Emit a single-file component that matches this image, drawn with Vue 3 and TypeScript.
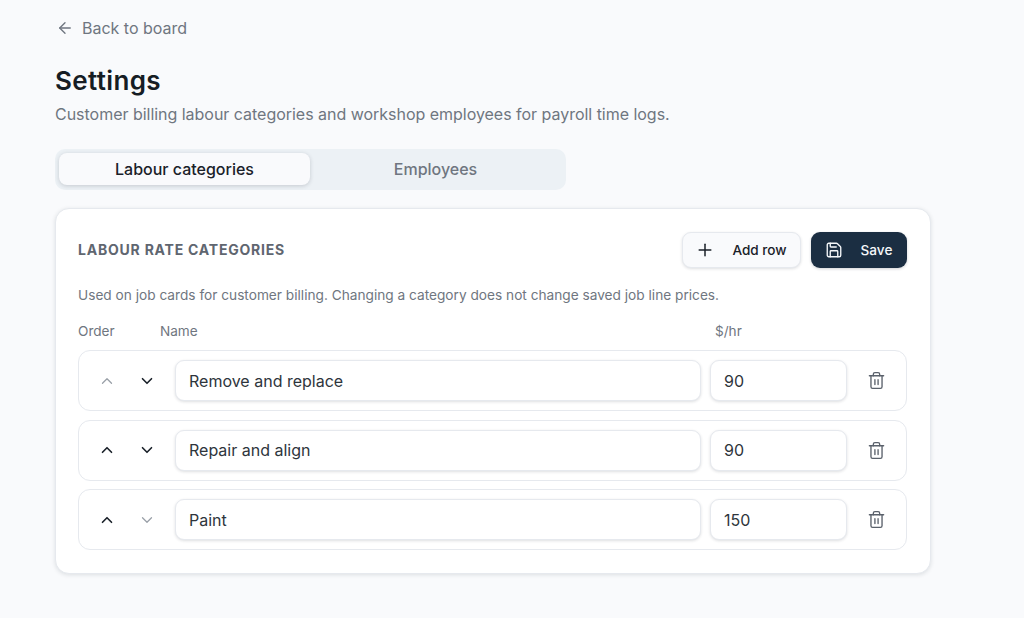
<script setup lang="ts">
interface Row { name: string; rate: string; upOff: boolean; downOff: boolean }
const rows: Row[] = [
  { name: 'Remove and replace', rate: '90', upOff: true, downOff: false },
  { name: 'Repair and align', rate: '90', upOff: false, downOff: false },
  { name: 'Paint', rate: '150', upOff: false, downOff: true },
]
</script>

<template>
  <div class="page">
    <a class="back">
      <svg width="18" height="18" viewBox="0 0 24 24" fill="none" stroke="currentColor" stroke-width="1.8" stroke-linecap="round" stroke-linejoin="round"><path d="M19 12H5" /><path d="m12 19-7-7 7-7" /></svg>
      <span>Back to board</span>
    </a>
    <h1>Settings</h1>
    <p class="sub">Customer billing labour categories and workshop employees for payroll time logs.</p>
    <div class="tabs">
      <div class="tab active">Labour categories</div>
      <div class="tab">Employees</div>
    </div>
    <section class="card">
      <header class="head">
        <h2>LABOUR RATE CATEGORIES</h2>
        <div class="actions">
          <button class="btn light">
            <svg width="20" height="20" viewBox="0 0 24 24" fill="none" stroke="currentColor" stroke-width="1.8" stroke-linecap="round"><path d="M5 12h14" /><path d="M12 5v14" /></svg>
            <span>Add row</span>
          </button>
          <button class="btn dark">
            <svg width="18" height="18" viewBox="0 0 24 24" fill="none" stroke="currentColor" stroke-width="1.8" stroke-linecap="round" stroke-linejoin="round"><path d="M15.2 3a2 2 0 0 1 1.4.6l3.8 3.8a2 2 0 0 1 .6 1.4V19a2 2 0 0 1-2 2H5a2 2 0 0 1-2-2V5a2 2 0 0 1 2-2z" /><path d="M17 21v-7a1 1 0 0 0-1-1H8a1 1 0 0 0-1 1v7" /><path d="M7 3v4a1 1 0 0 0 1 1h7" /></svg>
            <span>Save</span>
          </button>
        </div>
      </header>
      <p class="note">Used on job cards for customer billing. Changing a category does not change saved job line prices.</p>
      <div class="cols">
        <span class="c-order">Order</span>
        <span class="c-name">Name</span>
        <span>$/hr</span>
      </div>
      <div class="list">
        <div v-for="r in rows" :key="r.name" class="row">
          <button class="arrow" :class="{ off: r.upOff }">
            <svg width="18" height="18" viewBox="0 0 24 24" fill="none" stroke="currentColor" stroke-width="2.2" stroke-linecap="round" stroke-linejoin="round"><path d="m18 15-6-6-6 6" /></svg>
          </button>
          <button class="arrow" :class="{ off: r.downOff }">
            <svg width="18" height="18" viewBox="0 0 24 24" fill="none" stroke="currentColor" stroke-width="2.2" stroke-linecap="round" stroke-linejoin="round"><path d="m6 9 6 6 6-6" /></svg>
          </button>
          <div class="field name">{{ r.name }}</div>
          <div class="field rate">{{ r.rate }}</div>
          <button class="trash">
            <svg width="19" height="19" viewBox="0 0 24 24" fill="none" stroke="currentColor" stroke-width="1.7" stroke-linecap="round" stroke-linejoin="round"><path d="M3 6h18" /><path d="M19 6v14a2 2 0 0 1-2 2H7a2 2 0 0 1-2-2V6" /><path d="M8 6V4a2 2 0 0 1 2-2h4a2 2 0 0 1 2 2v2" /><path d="M10 11v6" /><path d="M14 11v6" /></svg>
          </button>
        </div>
      </div>
    </section>
  </div>
</template>

<style>
html, body { margin: 0; background: #f9fafc; }
</style>

<style scoped>
.page {
  box-sizing: border-box;
  width: 1024px;
  height: 618px;
  overflow: hidden;
  padding: 16px 94px 0 55px;
  font-family: Inter, "Liberation Sans", sans-serif;
  color: #1a2129;
  background: #f9fafc;
}
.back {
  display: flex;
  align-items: center;
  gap: 8px;
  height: 24px;
  font-size: 16px;
  letter-spacing: -0.01px;
  color: #6f7680;
}
.back svg { margin-left: 1px; }
h1 {
  margin: 25px 0 0;
  font-size: 26px;
  line-height: 32px;
  font-weight: 600;
  letter-spacing: 0.35px;
  color: #161d24;
}
.sub {
  margin: 5px 0 0;
  font-size: 16px;
  line-height: 24px;
  letter-spacing: -0.025px;
  color: #6f7680;
}
.tabs {
  display: grid;
  grid-template-columns: 1fr 1fr;
  box-sizing: border-box;
  width: 511px;
  height: 41px;
  margin-top: 23px;
  padding: 4px 5px 5px 4px;
  border-radius: 10px;
  background: #ecf1f5;
}
.tab {
  display: flex;
  align-items: center;
  justify-content: center;
  border-radius: 8px;
  font-size: 16px;
  font-weight: 500;
  color: #6f7680;
}
.tab.active {
  background: #f9fafc;
  color: #1a2129;
  box-shadow: 0 1px 4px rgba(20, 30, 45, 0.18);
}
.card {
  box-sizing: border-box;
  width: 876px;
  height: 366px;
  margin-top: 18px;
  padding: 23px 23px 23px 22px;
  background: #fff;
  border: 1px solid #e6e9ee;
  border-radius: 14px;
  box-shadow: 0 1px 4px rgba(20, 30, 45, 0.12);
}
.head {
  display: flex;
  align-items: center;
  justify-content: space-between;
}
h2 {
  position: relative;
  top: -1px;
  margin: 0;
  font-size: 14px;
  font-weight: 700;
  letter-spacing: 0.78px;
  color: #5f6670;
}
.actions { display: flex; gap: 10px; }
.btn {
  display: flex;
  align-items: center;
  justify-content: center;
  box-sizing: border-box;
  height: 36px;
  padding: 0 1px 0 0;
  border-radius: 9px;
  font-family: inherit;
  font-size: 13.6px;
  font-weight: 500;
}
.btn.light {
  gap: 17px;
  width: 119px;
  background: #f9fafc;
  color: #1a2129;
  border: 1px solid #e6e9ee;
  box-shadow: 0 1px 3px rgba(20, 30, 45, 0.14);
}
.btn.dark {
  gap: 18px;
  width: 96px;
  background: #1b2e42;
  color: #f5f7fa;
  border: 0;
  box-shadow: 0 1px 3px rgba(20, 30, 45, 0.2);
}
.note {
  margin: 17px 0 0;
  font-size: 13.68px;
  line-height: 20px;
  color: #6f7680;
}
.cols {
  display: flex;
  margin-top: 16px;
  font-size: 13.6px;
  line-height: 20px;
  color: #6f7680;
}
.c-order { width: 82px; }
.c-name { width: 555px; }
.list {
  display: flex;
  flex-direction: column;
  gap: 8.6px;
  margin-top: 9px;
}
.row {
  display: flex;
  align-items: center;
  box-sizing: border-box;
  height: 61px;
  padding: 0 9px 0 8px;
  border: 1px solid #e6e9ee;
  border-radius: 12px;
}
.arrow {
  display: flex;
  align-items: center;
  justify-content: center;
  width: 40px;
  height: 40px;
  padding: 0;
  background: none;
  border: 0;
  color: #1a2129;
}
.arrow.off { color: #9aa0a8; }
.arrow.off svg { stroke-width: 1.7; }
.field {
  display: flex;
  align-items: center;
  box-sizing: border-box;
  height: 41px;
  padding: 0 13px;
  background: #fff;
  border: 1px solid #e6e9ee;
  border-radius: 9px;
  font-size: 16px;
  color: #2e353c;
  box-shadow: 0 1px 3px rgba(20, 30, 45, 0.14);
}
.name { width: 526px; margin-left: 8px; }
.rate { width: 137px; margin-left: 9px; }
.trash {
  display: flex;
  align-items: center;
  justify-content: center;
  width: 40px;
  height: 40px;
  margin-left: 9px;
  padding: 0;
  background: none;
  border: 0;
  color: #5a616b;
}
</style>
